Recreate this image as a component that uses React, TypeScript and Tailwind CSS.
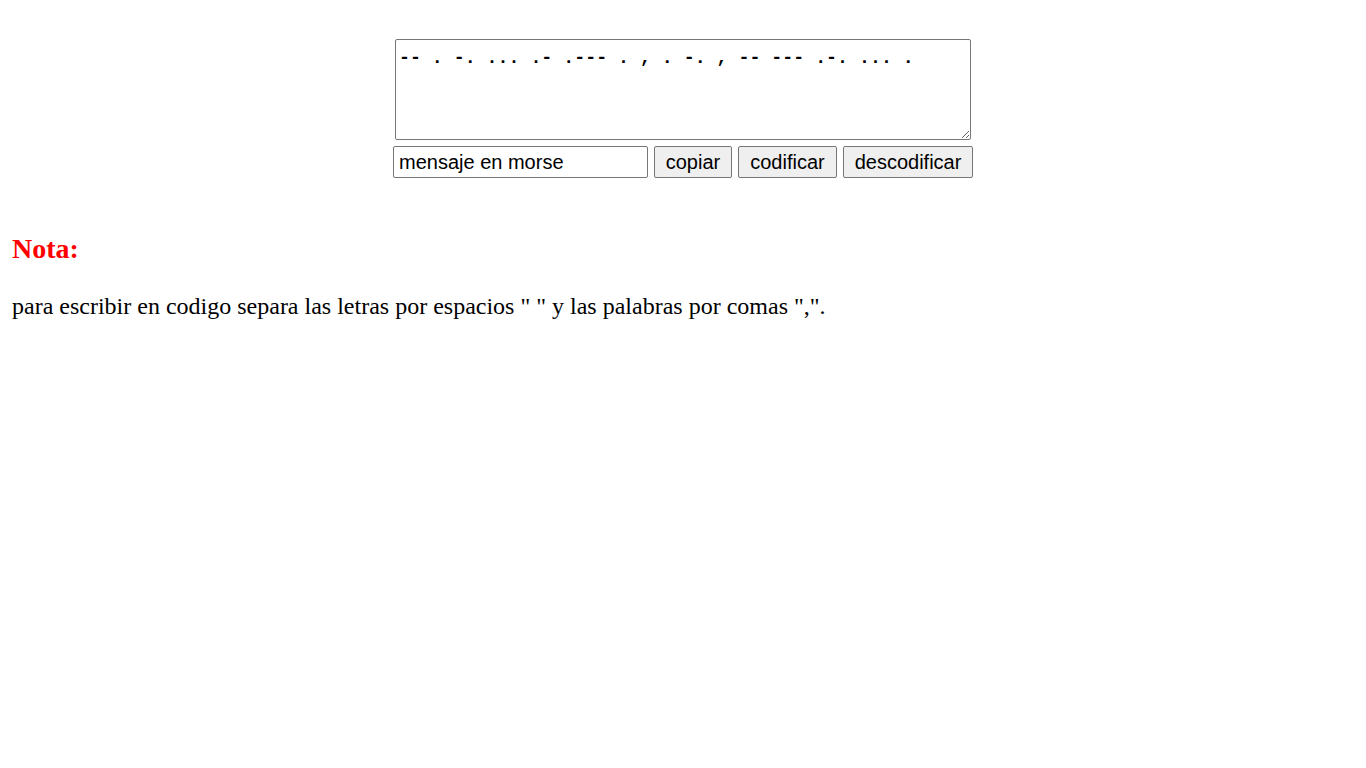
import React from "react";

export default function App() {
  const btn =
    "h-[32px] bg-[#efefef] border border-[#767676] rounded-[2px] text-[20px] text-black font-['Liberation_Sans',Arial,sans-serif] leading-none";
  return (
    <div className="min-h-screen bg-white text-black">
      <div className="flex flex-col items-center pt-[39px]">
        <textarea
          className="w-[576px] h-[101px] border border-[#767676] rounded-[2px] px-[3px] pt-[7px] pb-[2px] text-[18.25px] font-bold leading-[22px] font-['Liberation_Mono','Courier_New',monospace] resize"
          defaultValue="-- . -. ... .- .--- . , . -. , -- --- .-. ... ."
        />
        <div className="flex items-center gap-[6px] mt-[6px]">
          <input
            className="w-[255px] h-[32px] border border-[#767676] rounded-[2px] px-[5px] text-[20px] font-['Liberation_Sans',Arial,sans-serif]"
            defaultValue="mensaje en morse"
          />
          <button className={btn + " w-[78px]"}>copiar</button>
          <button className={btn + " w-[99px]"}>codificar</button>
          <button className={btn + " w-[130px]"}>descodificar</button>
        </div>
      </div>
      <div className="px-[12px] pt-[55px] font-['Liberation_Serif','Times_New_Roman',serif]">
        <h2 className="text-[28px] font-bold text-[#ff0000] leading-[32px]">Nota:</h2>
        <p className="mt-[27px] text-[24px] leading-[28px]">
          para escribir en codigo separa las letras por espacios " " y las palabras por comas ",".
        </p>
      </div>
    </div>
  );
}
